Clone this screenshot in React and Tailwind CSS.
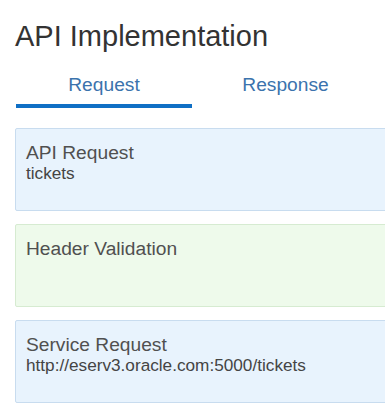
const cards = [
  { title: "API Request", sub: "tickets", tone: "blue" },
  { title: "Header Validation", sub: null, tone: "green" },
  { title: "Service Request", sub: "http://eserv3.oracle.com:5000/tickets", tone: "blue" },
];

const Card = ({ title, sub, tone }) => (
  <div
    className={
      tone === "green"
        ? "h-[83px] w-[390px] rounded-[2px] border border-[#d6ebd1] bg-[#eefaeb] px-[10px] pt-[13px]"
        : "h-[83px] w-[390px] rounded-[2px] border border-[#c8dcef] bg-[#e8f3fd] px-[10px] pt-[13px]"
    }
  >
    <div className="text-[19.2px] leading-[22px] text-[#505050]">{title}</div>
    {sub && <div className="text-[17.2px] leading-[19px] text-[#444444]">{sub}</div>}
  </div>
);

const App = () => {
  return (
    <div className="h-[411px] w-[385px] overflow-hidden bg-white font-['Liberation_Sans',Arial,sans-serif]">
      <h1 className="pl-[15px] pt-[20px] text-[29px] font-normal leading-[33px] text-[#333333]">
        API Implementation
      </h1>

      <div className="mt-[21px] flex pl-[16px]">
        <div className="flex w-[176px] flex-col items-center">
          <span className="text-[19.2px] leading-[22px] text-[#3b73ad]">Request</span>
          <div className="mt-[8px] h-[4px] w-full bg-[#0f6fc5]" />
        </div>
        <div className="flex w-[187px] flex-col items-center">
          <span className="text-[19.2px] leading-[22px] text-[#3b73ad]">Response</span>
        </div>
      </div>

      <div className="mt-[20px] flex flex-col gap-[13px] pl-[15px]">
        {cards.map((c) => (
          <Card key={c.title} {...c} />
        ))}
      </div>
    </div>
  );
};

export default App;
